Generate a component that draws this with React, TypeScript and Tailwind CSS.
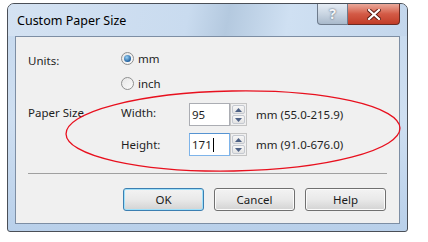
import React from "react";

const font = { fontFamily: '"Segoe UI", "Noto Sans", "Liberation Sans", sans-serif' };

const Radio = ({ checked }: { checked?: boolean }) => (
  <span className="relative inline-flex h-[13px] w-[13px] items-center justify-center rounded-full border border-[#8e8f8f] bg-gradient-to-br from-[#e6e6e6] to-[#fbfbfb]">
    {checked && (
      <span className="h-[7px] w-[7px] rounded-full bg-[radial-gradient(circle_at_40%_35%,#9bd3f6,#1f5f9e_70%,#0c3d73)]" />
    )}
  </span>
);

const Spin = () => (
  <div className="flex h-full w-[17px] flex-col gap-px border border-[#c4c4c4] bg-[#f0f0f0] p-px">
    <div className="flex flex-1 items-center justify-center rounded-[2px] border border-[#c5c9d0] bg-gradient-to-b from-[#f7f7f7] to-[#e3e3e3]">
      <svg width="7" height="4" viewBox="0 0 7 4">
        <path d="M0 4 L3.5 0 L7 4 Z" fill="#4d6185" />
      </svg>
    </div>
    <div className="flex flex-1 items-center justify-center rounded-[2px] border border-[#c5c9d0] bg-gradient-to-b from-[#f7f7f7] to-[#e3e3e3]">
      <svg width="7" height="4" viewBox="0 0 7 4">
        <path d="M0 0 L3.5 4 L7 0 Z" fill="#4d6185" />
      </svg>
    </div>
  </div>
);

const Field = ({ value, focused, range }: { value: string; focused?: boolean; range: string }) => (
  <div className="flex h-[23px] items-center">
    <div
      className={`flex h-full w-[41px] items-center border bg-white pl-[2px] ${
        focused ? "border-[#7eb4ea] border-t-[#5593d1]" : "border-[#abadb3] border-t-[#abadb3]"
      }`}
    >
      <span>{value}</span>
      {focused && <span className="ml-px h-[14px] w-px bg-black" />}
    </div>
    <Spin />
    <span className="ml-[9px]">{range}</span>
  </div>
);

const Btn = ({ label, primary }: { label: string; primary?: boolean }) => (
  <button
    className={`flex h-[23px] w-[81px] items-center justify-center rounded-[3px] border bg-gradient-to-b from-[#f3f3f3] via-[#e9e9e9] to-[#d3d3d3] text-[#1a1a1a] ${
      primary ? "border-[#3c7fb1] shadow-[inset_0_0_0_1px_#9ee0fa]" : "border-[#707070] shadow-[inset_0_0_0_1px_#fbfbfb]"
    }`}
  >
    {label}
  </button>
);

export default function App() {
  return (
    <div
      className="relative h-[242px] w-[428px] overflow-hidden bg-white text-[11.5px] leading-[16px] text-[#1e1e1e]"
      style={font}
    >
      <div className="ml-[7px] mt-[3px] flex h-[229px] w-[401px] flex-col rounded-t-[7px] rounded-b-[3px] border border-[#4a4f57] bg-gradient-to-b from-[#c6d9ee] via-[#cfdff1] to-[#b9d0ea]">
        {/* title bar */}
        <div className="flex h-[32px] items-start justify-between rounded-t-[6px] bg-[linear-gradient(100deg,#d4e2f2_0%,#c9dbef_45%,#b4c9df_55%,#cfe0f2_70%,#c3d6ec_100%)]">
          <span className="ml-[9px] mt-[9px] text-[12.5px] leading-[16px] text-black">Custom Paper Size</span>
          <div className="mr-[7px] flex h-[21px]">
            <div className="flex h-full w-[31px] items-center justify-center rounded-bl-[4px] border border-t-0 border-[#6e7b8c] bg-gradient-to-b from-[#e5ecf4] via-[#c9d5e2] to-[#a9b9cb] text-[14px] font-bold text-[#f4f6f9] [text-shadow:0_0_2px_#3a4756]">
              ?
            </div>
            <div className="flex h-full w-[52px] items-center justify-center rounded-br-[4px] border border-l-0 border-t-0 border-[#6b2a22] bg-gradient-to-b from-[#e9a89a] via-[#d35a46] to-[#c13c27]">
              <svg width="14" height="11" viewBox="0 0 14 11">
                <path d="M2 1 L12 10 M12 1 L2 10" stroke="#5a1a12" strokeWidth="4" strokeLinecap="square" />
                <path d="M2 1 L12 10 M12 1 L2 10" stroke="#ffffff" strokeWidth="2.2" strokeLinecap="square" />
              </svg>
            </div>
          </div>
        </div>
        {/* client */}
        <div className="mx-[7px] mb-[7px] flex-1 border border-[#7d8ea4] bg-[#f0f0f0]">
          <div className="flex pl-[12px] pt-[15px]">
            <span className="mt-[1px] w-[93px]">Units:</span>
            <div className="flex flex-col gap-[12px]">
              <label className="flex h-[13px] items-center gap-[4px]">
                <Radio checked />
                <span>mm</span>
              </label>
              <label className="flex h-[13px] items-center gap-[4px]">
                <Radio />
                <span>inch</span>
              </label>
            </div>
          </div>
          <div className="mt-[13px] flex pl-[12px]">
            <span className="mt-[2px] w-[93px]">Paper Size</span>
            <div className="flex flex-col gap-[7px]">
              <div className="flex items-center">
                <span className="mt-[-3px] w-[68px]">Width:</span>
                <Field value="95" range="mm (55.0-215.9)" />
              </div>
              <div className="flex items-center">
                <span className="w-[68px]">Height:</span>
                <Field value="171" focused range="mm (91.0-676.0)" />
              </div>
            </div>
          </div>
          <div className="mx-[12px] mt-[17px] border-t border-[#a0a0a0]" />
          <div className="mt-[14px] flex justify-end gap-[10px] pr-[13px]">
            <Btn label="OK" primary />
            <Btn label="Cancel" />
            <Btn label="Help" />
          </div>
        </div>
      </div>
      <svg className="pointer-events-none absolute left-0 top-0" width="428" height="242">
        <ellipse
          cx="233"
          cy="131"
          rx="167"
          ry="40"
          fill="none"
          stroke="#e8101e"
          strokeWidth="1.3"
          transform="rotate(-1 233 131)"
        />
      </svg>
    </div>
  );
}
